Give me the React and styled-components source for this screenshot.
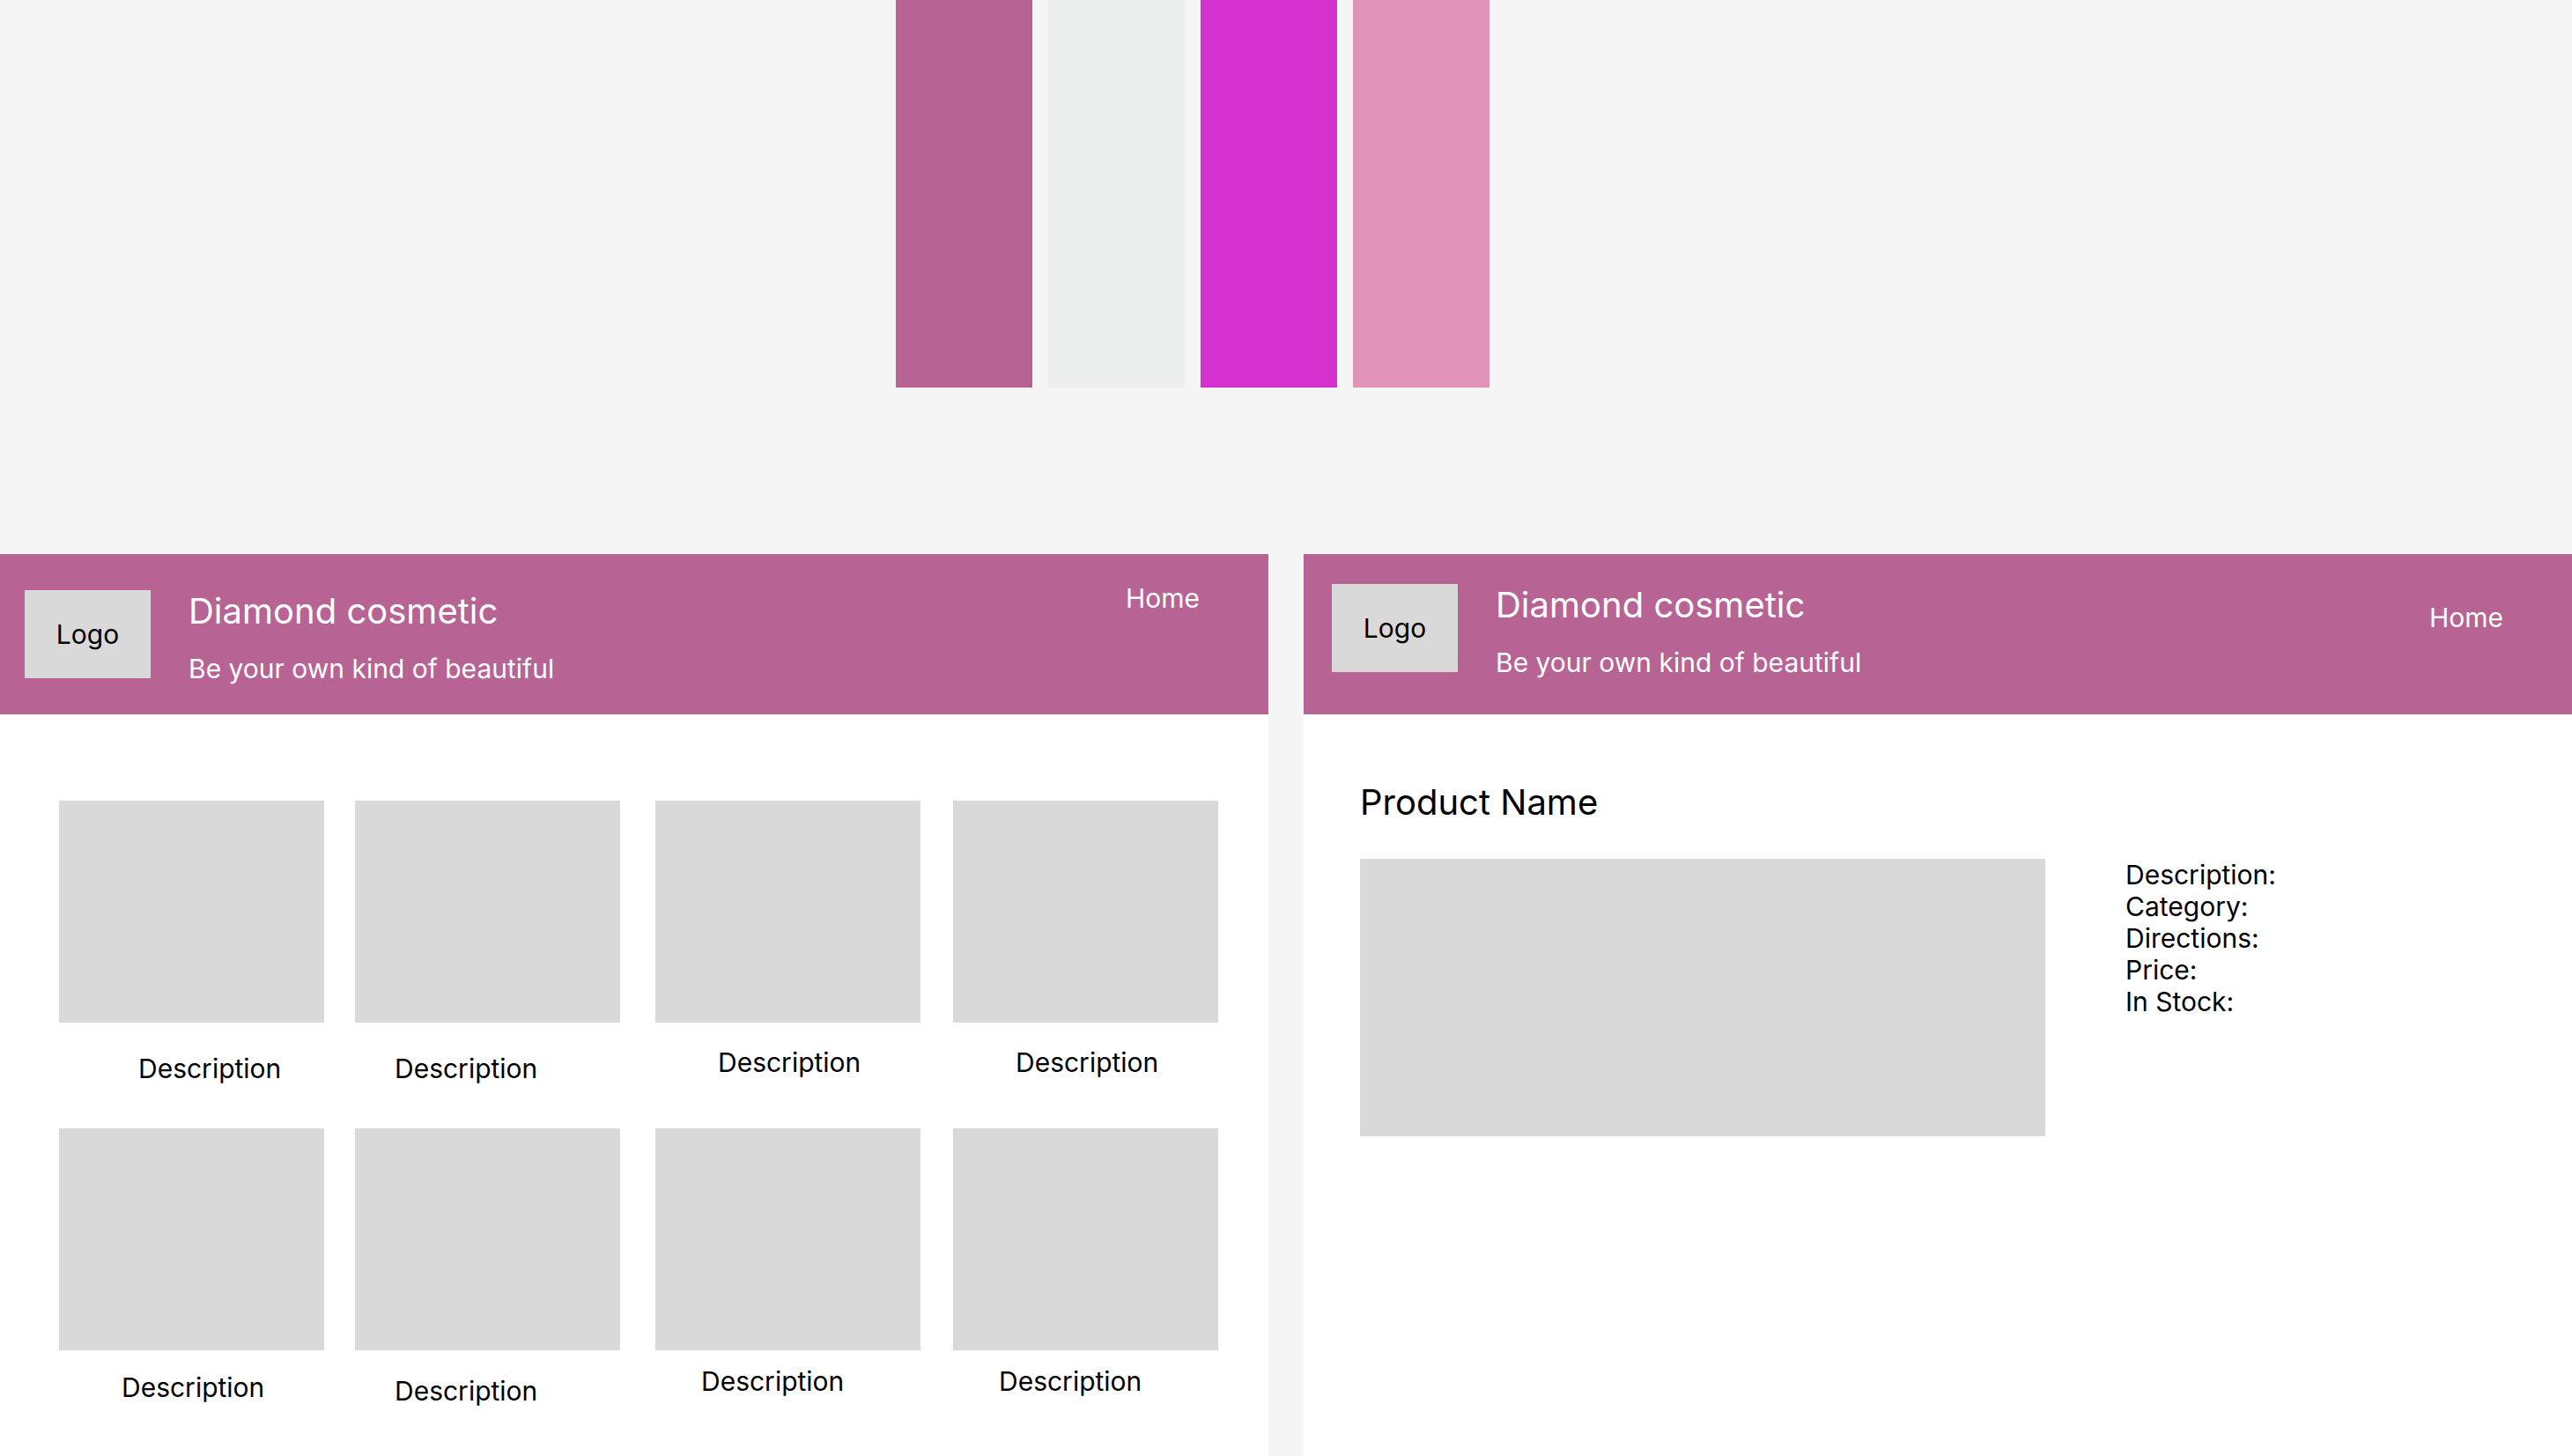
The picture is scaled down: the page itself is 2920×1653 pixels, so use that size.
import React from "react";
import styled, { createGlobalStyle } from "styled-components";

const color = {
  canvas: "#f5f5f5",
  surface: "#ffffff",
  brand: "#b76393",
  mist: "#ebeeec",
  magenta: "#d531ce",
  rose: "#e194b7",
  placeholder: "#d9d9d9",
  ink: "#000000",
};

const GlobalStyle = createGlobalStyle`
  *, *::before, *::after { box-sizing: border-box; }
  body {
    margin: 0;
    background: ${color.canvas};
    color: ${color.ink};
    font-family: Inter, "Liberation Sans", sans-serif;
    font-size: 30px;
    line-height: 36px;
  }
`;

const Page = styled.div`
  display: flex;
  flex-direction: column;
  gap: 189px;
  min-height: 100vh;
`;

const Palette = styled.section`
  display: flex;
  gap: 18px;
  padding-left: 1017px;
`;

const Swatch = styled.div`
  width: 155px;
  height: 440px;
  background: ${(p) => p.$fill};
`;

const Boards = styled.div`
  display: grid;
  grid-template-columns: repeat(2, minmax(0, 1fr));
  gap: 40px;
  flex: 1;
`;

const Board = styled.article`
  background: ${color.surface};
`;

const Header = styled.header`
  display: flex;
  justify-content: space-between;
  align-items: flex-start;
  min-height: 182px;
  padding: 0 78px 0 ${(p) => p.$inset}px;
  background: ${color.brand};
  color: ${color.surface};
`;

const Brand = styled.div`
  display: flex;
  gap: 43px;
  padding-top: ${(p) => p.$top}px;
`;

const Logo = styled.div`
  display: grid;
  place-items: center;
  width: 143px;
  height: 100px;
  background: ${color.placeholder};
  color: ${color.ink};
`;

const BrandText = styled.div`
  display: flex;
  flex-direction: column;
  gap: 23px;
`;

const Heading = styled.h1`
  margin: 0;
  font-size: 40px;
  font-weight: 400;
  line-height: 48px;
`;

const Tagline = styled.p`
  margin: 0;
`;

const Nav = styled.nav`
  padding-top: ${(p) => p.$top}px;
`;

const NavLink = styled.a`
  display: block;
  color: inherit;
  text-decoration: none;
`;

const Products = styled.main`
  display: grid;
  grid-template-columns: 336fr 341fr 338fr 301fr;
  row-gap: 50px;
  padding: 98px 57px 50px 67px;
`;

const Product = styled.figure`
  width: 301px;
  margin: 0;
`;

const Picture = styled.div`
  height: ${(p) => p.$height}px;
  background: ${color.placeholder};
`;

const Caption = styled.figcaption`
  padding: ${(p) => p.$top}px 0 0 ${(p) => p.$indent}px;
`;

const Detail = styled.main`
  display: flex;
  flex-direction: column;
  gap: 40px;
  padding: 76px 64px;
`;

const DetailBody = styled.div`
  display: grid;
  grid-template-columns: 778fr 443fr;
  gap: 91px;
`;

const Facts = styled.ul`
  margin: 0;
  padding: 0;
  list-style: none;
`;

const swatches = [color.brand, color.mist, color.magenta, color.rose];

const products = [
  { top: 34, indent: 90 },
  { top: 34, indent: 45 },
  { top: 27, indent: 71 },
  { top: 27, indent: 71 },
  { top: 24, indent: 71 },
  { top: 28, indent: 45 },
  { top: 17, indent: 52 },
  { top: 17, indent: 52 },
];

const facts = ["Description:", "Category:", "Directions:", "Price:", "In Stock:"];

function SiteHeader({ inset, brandTop, navTop }) {
  return (
    <Header $inset={inset}>
      <Brand $top={brandTop}>
        <Logo>Logo</Logo>
        <BrandText>
          <Heading>Diamond cosmetic</Heading>
          <Tagline>Be your own kind of beautiful</Tagline>
        </BrandText>
      </Brand>
      <Nav $top={navTop}>
        <NavLink href="#home">Home</NavLink>
      </Nav>
    </Header>
  );
}

export default function App() {
  return (
    <Page>
      <GlobalStyle />
      <Palette>
        {swatches.map((fill) => (
          <Swatch key={fill} $fill={fill} />
        ))}
      </Palette>
      <Boards>
        <Board>
          <SiteHeader inset={28} brandTop={41} navTop={32} />
          <Products>
            {products.map((product, i) => (
              <Product key={i}>
                <Picture $height={252} />
                <Caption $top={product.top} $indent={product.indent}>
                  Description
                </Caption>
              </Product>
            ))}
          </Products>
        </Board>
        <Board>
          <SiteHeader inset={32} brandTop={34} navTop={54} />
          <Detail>
            <Heading as="h2">Product Name</Heading>
            <DetailBody>
              <Picture $height={315} />
              <Facts>
                {facts.map((fact) => (
                  <li key={fact}>{fact}</li>
                ))}
              </Facts>
            </DetailBody>
          </Detail>
        </Board>
      </Boards>
    </Page>
  );
}
